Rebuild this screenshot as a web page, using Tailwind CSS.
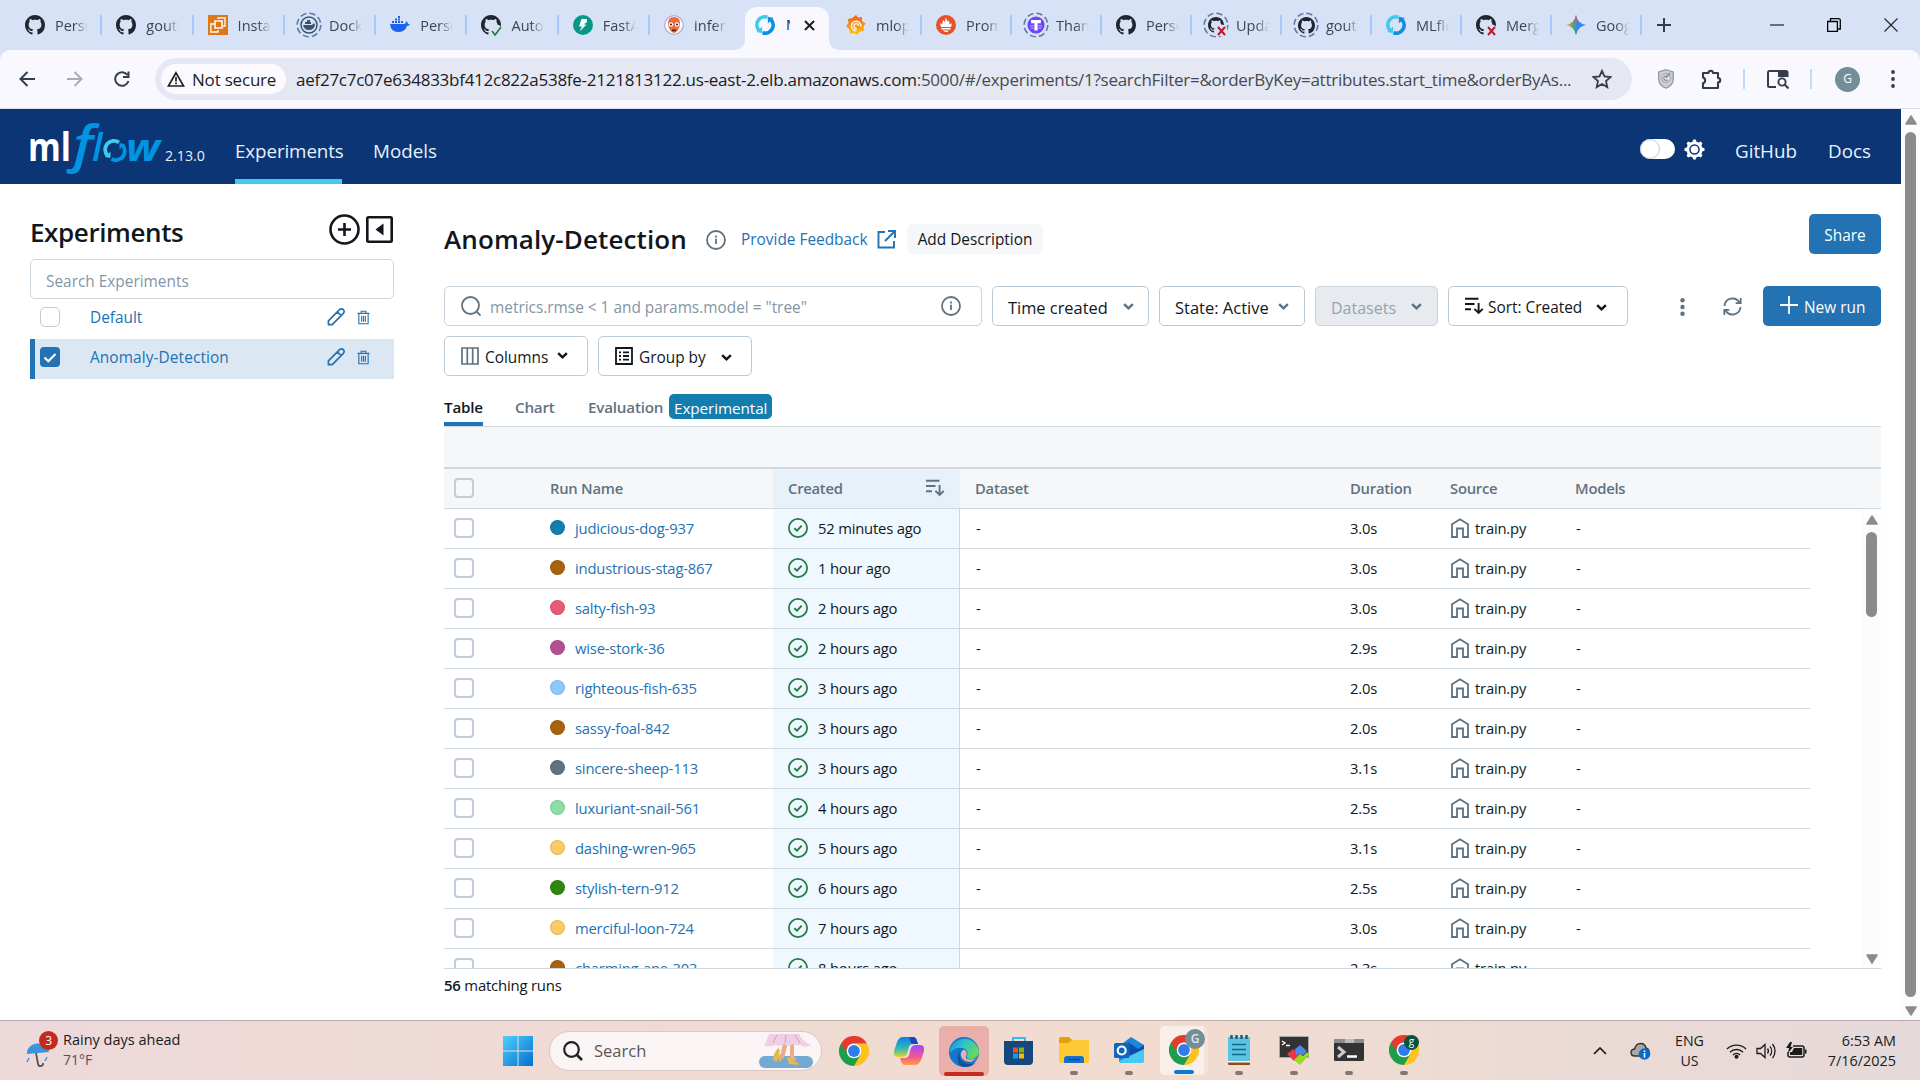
<!DOCTYPE html>
<html lang="en">
<head>
<meta charset="utf-8">
<title>MLflow</title>
<script src="https://cdn.jsdelivr.net/npm/@tailwindcss/browser@4"></script>
</head>
<body class="w-[1920px] h-[1080px] overflow-hidden bg-white font-['Open_Sans','Noto_Sans',sans-serif] text-[15.4px] leading-5 text-[#11171c] flex flex-col whitespace-nowrap">

<svg class="hidden">
  <symbol id="gh" viewBox="0 0 16 16"><path fill="#1f2630" d="M8 0C3.58 0 0 3.58 0 8c0 3.54 2.29 6.53 5.47 7.59.4.07.55-.17.55-.38 0-.19-.01-.82-.01-1.49-2.01.37-2.53-.49-2.69-.94-.09-.23-.48-.94-.82-1.13-.28-.15-.68-.52-.01-.53.63-.01 1.08.58 1.23.82.72 1.21 1.87.87 2.33.66.07-.52.28-.87.51-1.07-1.78-.2-3.64-.89-3.64-3.95 0-.87.31-1.59.82-2.15-.08-.2-.36-1.02.08-2.12 0 0 .67-.21 2.2.82.64-.18 1.32-.27 2-.27s1.36.09 2 .27c1.53-1.04 2.2-.82 2.2-.82.44 1.1.16 1.92.08 2.12.51.56.82 1.27.82 2.15 0 3.07-1.87 3.75-3.65 3.95.29.25.54.73.54 1.48 0 1.07-.01 1.93-.01 2.2 0 .21.15.46.55.38A8.01 8.01 0 0 0 16 8c0-4.42-3.58-8-8-8z"/></symbol>
  <symbol id="ring" viewBox="0 0 26 26"><circle cx="13" cy="13" r="11.8" fill="none" stroke="#5b7aa5" stroke-width="1.6" stroke-dasharray="6.2 3.07"/></symbol>
  <symbol id="mlf" viewBox="0 0 20 20"><path d="M12.500 2.300A8 8 0 0 0 4 15.300" fill="none" stroke="#43c9ed" stroke-width="3.600"/><path d="M7.500 17.700A8 8 0 0 0 16 4.700" fill="none" stroke="#0b8fe0" stroke-width="3.600"/><path d="M7.200 11.500v6.800L1.300 17z" fill="#43c9ed"/><path d="M12.800 8.500V1.700L18.700 3z" fill="#0b8fe0"/></symbol>
  <symbol id="caret" viewBox="0 0 12 12"><path d="M2 3.700 6 7.700 10 3.700" fill="none" stroke="currentColor" stroke-width="2.3"/></symbol>
  <symbol id="info" viewBox="0 0 20 20"><circle cx="10" cy="10" r="9" fill="none" stroke="currentColor" stroke-width="1.8"/><path d="M10 8.800v5.200M10 5.600v1.900" stroke="currentColor" stroke-width="1.8"/></symbol>
  <symbol id="pencil" viewBox="0 0 20 20"><path d="M1.500 18.500v-4L13.200 2.700a2.700 2.700 0 0 1 4 4L5.500 18.500zM10.800 5l4.200 4.200" fill="none" stroke="currentColor" stroke-width="1.8" stroke-linejoin="round"/></symbol>
  <symbol id="trash" viewBox="0 0 14 16"><path d="M.5 3.500h13M4.500 3.500V1.200h5v2.300M2 3.500v11.200h10V3.500M5 6v6.500M7 6v6.500M9 6v6.500" fill="none" stroke="currentColor" stroke-width="1.2"/></symbol>
  <symbol id="sort" viewBox="0 0 20 20"><path d="M1 2.800h13.500M1 8h9.500M1 13.200h6" fill="none" stroke="currentColor" stroke-width="1.900"/><path d="M14.600 7v9.800M10.400 12.800l4.200 4.200 4.200-4.200" fill="none" stroke="currentColor" stroke-width="1.900"/></symbol>
  <symbol id="ok" viewBox="0 0 20 20"><circle cx="10" cy="10" r="9.100" fill="none" stroke="#277c43" stroke-width="1.800"/><path d="M6.300 10.200 9 12.700 13.700 7.600" fill="none" stroke="#277c43" stroke-width="2"/></symbol>
  <symbol id="home" viewBox="0 0 18 20"><path d="M1 6.300 9 1.200l8 5.100v12.700h-5v-8.500H6v8.500H1z" fill="none" stroke="#5f7281" stroke-width="1.800"/></symbol>
  <symbol id="up" viewBox="0 0 12 10"><path d="M6 1 11 9H1z" fill="#8b8b8b" stroke="#8b8b8b" stroke-width="1.500" stroke-linejoin="round"/></symbol>
  <symbol id="down" viewBox="0 0 12 10"><path d="M6 9 11 1H1z" fill="#8b8b8b" stroke="#8b8b8b" stroke-width="1.500" stroke-linejoin="round"/></symbol>
  <symbol id="chrome" viewBox="0 0 30 30"><path d="M15 7.500h13A15 15 0 0 1 15 30l-2-4z" fill="#fcc31e"/><path d="M2 7.500A15 15 0 0 0 15 30l6.500-11.200L15 15z" fill="#1e9e4a"/><path d="M2 7.500A15 15 0 0 1 28 7.500H15a7.500 7.500 0 0 0-7 5L7 16z" fill="#e33b2e"/><circle cx="15" cy="15" r="7.300" fill="#fff"/><circle cx="15" cy="15" r="5.900" fill="#2f7bea"/></symbol>
</svg>

<!-- tab strip -->
<header class="h-[50px] shrink-0 bg-[#d8e2f6] flex text-[14.500px] text-[#3c4556]">
  <div id="tabs-left" class="flex pl-[11px] w-[741px] shrink-0"></div>
  <div class="w-[91px] shrink-0 flex items-end">
    <div class="w-2.5 h-2.5 -ml-1.5 bg-[#f9f8ff] shrink-0"><div class="size-2.5 bg-[#d8e2f6] rounded-br-[10px]"></div></div>
    <div class="w-[84px] h-[43px] shrink-0 bg-[#f9f8ff] rounded-t-[12px] flex items-center pl-[10px] pb-[7px]">
      <svg class="size-5"><use href="#mlf"/></svg>
      <span class="w-[4px] ml-[11px] overflow-hidden text-[#1f1f1f]">M</span>
      <svg class="size-[11px] ml-[14px]" viewBox="0 0 12 12"><path d="M1 1l10 10M11 1 1 11" stroke="#1f1f1f" stroke-width="2.200"/></svg>
    </div>
    <div class="w-2.5 h-2.5 bg-[#f9f8ff] shrink-0"><div class="size-2.5 bg-[#d8e2f6] rounded-bl-[10px]"></div></div>
  </div>
  <div id="tabs-right" class="flex shrink-0"></div>
  <div class="flex grow items-center justify-between pl-[15px] pr-[22px]">
    <svg class="size-[14px]" viewBox="0 0 14 14"><path d="M7 0v14M0 7h14" stroke="#333d4c" stroke-width="2"/></svg>
    <div class="flex items-center gap-[43px] text-[#222]">
      <svg class="size-[14px]" viewBox="0 0 14 14"><path d="M0 7h14" stroke="currentColor" stroke-width="1.200"/></svg>
      <svg class="size-[14px]" viewBox="0 0 14 14"><path d="M.6 3.500h9.800v9.900H.6zM3.500 3.500V.7h8.200a1.600 1.600 0 0 1 1.600 1.600V11h-2.900" fill="none" stroke="#000" stroke-width="1.300"/></svg>
      <svg class="size-[14px]" viewBox="0 0 14 14"><path d="M.5.5l13 13M13.500.5l-13 13" stroke="currentColor" stroke-width="1.100"/></svg>
    </div>
  </div>
</header>

<!-- address bar -->
<div class="h-[59px] shrink-0 bg-[#d8e2f6]"><div class="h-[59px] rounded-t-[10px] bg-[#f9f8ff] border-b border-[#d9dcea] flex items-center pl-[19px]">
  <svg class="size-4 shrink-0" viewBox="0 0 16 16"><path d="M16 8H2M8.500 1 1.500 8l7 7" fill="none" stroke="#333d4c" stroke-width="2"/></svg>
  <svg class="size-4 shrink-0 ml-8" viewBox="0 0 16 16"><path d="M0 8h14M7.500 1l7 7-7 7" fill="none" stroke="#a8aab4" stroke-width="2"/></svg>
  <svg class="size-4 shrink-0 ml-[31px]" viewBox="0 0 16 16"><path d="M14.500 10A6.800 6.800 0 1 1 13.500 4M14.500.5v5.500H9" fill="none" stroke="#333d4c" stroke-width="2"/></svg>
  <div class="ml-[25px] w-[1477px] h-[42px] shrink-0 rounded-full bg-[#e5e8f3] flex items-center text-[17px]">
    <div class="ml-1.5 w-[125px] h-[30px] shrink-0 rounded-full bg-[#fbfaff] flex items-center pl-1.5 text-[#1f1f1f]">
      <svg class="w-[18px] h-4 mr-[7px] shrink-0" viewBox="0 0 18 16"><path d="M9 1.800 16.600 15H1.400z" fill="none" stroke="#1f1f1f" stroke-width="1.700"/><path d="M9 6v4.500M9 11.500v1.800" stroke="#1f1f1f" stroke-width="1.700"/></svg>
      <span class="tracking-[-0.2px] pt-0.5">Not secure</span>
    </div>
    <span class="ml-[10px] pt-0.5 text-[#474a50] w-[1290px] shrink-0 tracking-[-0.26px]"><span class="text-[#1b1c1f]">aef27c7c07e634833bf412c822a538fe-2121813122.us-east-2.elb.amazonaws.com</span>:5000/#/experiments/1?searchFilter=&amp;orderByKey=attributes.start_time&amp;orderByAs...</span>
    <svg class="size-[20px] shrink-0 ml-[6px]" viewBox="0 0 20 20"><path d="M10 1.800l2.500 5.600 6.100.6-4.600 4.100 1.300 6L10 15l-5.300 3.100 1.300-6L1.400 8l6.100-.6z" fill="none" stroke="#333d4c" stroke-width="1.800"/></svg>
  </div>
  <svg class="w-4 h-5 ml-[26px] shrink-0" viewBox="0 0 16 20"><path d="M8 .7 15.300 3v7c0 4-3 7.500-7.300 9.300C3.700 17.500.7 14 .7 10V3z" fill="#c9cdd6" stroke="#8d94a1" stroke-width="1.200"/><circle cx="8" cy="9" r="4.300" fill="#e9ebf0" stroke="#9299a6"/><path d="M9.800 7.600a2.300 2.300 0 1 0 0 3M8 9l4-5" stroke="#858c99" fill="none" stroke-width="1.300"/></svg>
  <svg class="w-[21px] h-[21px] ml-[27px] shrink-0" viewBox="0 0 21 21"><path d="M2 4h5.500a2.200 2.200 0 0 1 4.400 0H17v5a2.200 2.200 0 0 1 0 4.400V19H2v-4.800a2.900 2.900 0 0 0 0-5.600z" fill="none" stroke="#333d4c" stroke-width="2.100" stroke-linejoin="round"/><path d="M7.700 3a2.100 2.100 0 0 1 4.200 0M18 9a2.200 2.200 0 0 1 0 4.400" fill="#333d4c"/></svg>
  <div class="w-0.5 h-5 bg-[#c6dafc] ml-[21px] shrink-0"></div>
  <svg class="w-[22px] h-[19px] ml-[22px] shrink-0" viewBox="0 0 22 19"><path d="M9 17H2.500A1.500 1.500 0 0 1 1 15.500v-13A1.500 1.500 0 0 1 2.500 1H19a1.500 1.500 0 0 1 1.500 1.500V7" fill="none" stroke="#333d4c" stroke-width="2"/><path d="M11 1h9.500v6H11z" fill="#333d4c"/><circle cx="15" cy="12" r="3.600" fill="none" stroke="#333d4c" stroke-width="1.900"/><path d="M17.500 14.500 21.500 18.500" stroke="#333d4c" stroke-width="2"/></svg>
  <div class="w-0.5 h-5 bg-[#c6dafc] ml-[21px] shrink-0"></div>
  <div class="size-[25px] ml-[23px] rounded-full bg-[#738d99] text-white text-xs flex items-center justify-center shrink-0">G</div>
  <svg class="w-1 h-[18px] ml-[31px] shrink-0" viewBox="0 0 4 18"><circle cx="2" cy="2" r="1.900" fill="#333d4c"/><circle cx="2" cy="9" r="1.900" fill="#333d4c"/><circle cx="2" cy="16" r="1.900" fill="#333d4c"/></svg>
</div></div>

<!-- page -->
<div class="h-[911px] shrink-0 flex">
  <div class="w-[1901px] shrink-0 flex flex-col">
    <nav class="h-[75px] shrink-0 bg-[#0b3574] flex pl-[29px] pr-[30px] text-[#e7f1fb] text-[18.800px]">
      <svg class="w-[133px] h-[75px] shrink-0 font-['Open_Sans',sans-serif]" viewBox="29 109 133 75">
        <text x="28" y="161" font-size="39" font-weight="700" fill="#fff" textLength="43" lengthAdjust="spacingAndGlyphs">ml</text>
        <text x="73" y="162" font-size="51" font-weight="600" font-style="italic" fill="#0194e2" textLength="20" lengthAdjust="spacingAndGlyphs">f</text>
        <text x="92" y="161" font-size="38" font-weight="600" font-style="italic" fill="#0194e2">l</text>
        <path d="M119 142.400a8.800 8.800 0 0 0-11.500 13.200" fill="none" stroke="#43c9ed" stroke-width="3.800"/><path d="M111.500 158.800a8.800 8.800 0 0 0 11-13.500" fill="none" stroke="#0194e2" stroke-width="3.800"/><path d="M110.500 151.500v6.500l-5.500-1z" fill="#43c9ed"/><path d="M119.500 149.500v-6.500l5.500 1z" fill="#0194e2"/>
        <text x="126" y="161" font-size="38" font-weight="700" font-style="italic" fill="#0194e2" textLength="34" lengthAdjust="spacingAndGlyphs">w</text>
      </svg>
      <span class="text-[14.200px] w-[69px] pl-[3px] pt-[37px] shrink-0">2.13.0</span>
      <a class="w-[107px] ml-1 pt-[30px] border-b-[5px] border-[#43c9ed] leading-6 shrink-0 -tracking-[0.1px]">Experiments</a>
      <a class="ml-[31px] pt-[30px] leading-6">Models</a>
      <div class="ml-auto flex pt-[30px]">
        <div class="w-[35px] h-5 rounded-full bg-white"><div class="size-5 rounded-full border border-[#c0cdd8] bg-white"></div></div>
        <svg class="size-[21px] ml-[9px]" viewBox="0 0 21 21"><g fill="#fff"><circle cx="10.500" cy="10.500" r="8"/><path d="M7.800 5 9.300.5h2.400L13.200 5zM7.800 16l1.500 4.500h2.400l1.500-4.500zM5 7.800.5 9.300v2.400L5 13.200zM16 7.800l4.500 1.500v2.400L16 13.200z"/><path transform="rotate(45 10.500 10.500)" d="M7.800 5 9.300.5h2.400L13.200 5zM7.800 16l1.500 4.500h2.400l1.500-4.500zM5 7.800.5 9.300v2.400L5 13.200zM16 7.800l4.500 1.500v2.400L16 13.200z"/></g><circle cx="10.500" cy="10.500" r="4.500" fill="none" stroke="#0b3574" stroke-width="1.500"/></svg>
        <a class="ml-[30px] leading-6 w-[63px]">GitHub</a>
        <a class="ml-[30px] leading-6 w-[43px]">Docs</a>
      </div>
    </nav>

    <div class="flex grow">
      <!-- sidebar -->
      <aside class="w-[394px] pl-[30px] pt-[30px] shrink-0">
        <div class="flex h-[45px]">
          <h2 class="text-[26px] font-semibold leading-9 -tracking-[0.4px]">Experiments</h2>
          <svg class="size-[31px] ml-auto" viewBox="0 0 31 31"><circle cx="15.500" cy="15.500" r="14" fill="none" stroke="#11171c" stroke-width="2.600"/><path d="M15.500 9v13M9 15.500h13" stroke="#11171c" stroke-width="2.600"/></svg>
          <svg class="size-[27px] ml-1.5 mr-[1px] mt-[2px]" viewBox="0 0 27 27"><rect x="1.300" y="1.300" width="24.400" height="24.400" rx="1" fill="none" stroke="#11171c" stroke-width="2.600"/><path d="M17.500 7.500v12l-8-6z" fill="#11171c"/></svg>
        </div>
        <div class="h-10 w-[364px] border border-[#cdd8e1] rounded-[5px] pl-[15px] flex items-center pt-[5px] text-[#8396a5]">Search Experiments</div>
        <div class="h-10 w-[364px] flex items-center pl-2.5 text-[#2272b4] pb-1">
          <div class="size-5 rounded-[5px] border border-[#c0cdd8] mr-[30px]"></div><span class="pt-0.5">Default</span>
          <svg class="size-[19px] ml-auto mb-0.5 mr-px"><use href="#pencil"/></svg><svg class="w-[13px] h-[15px] ml-2.5 mr-6"><use href="#trash"/></svg>
        </div>
        <div class="h-10 w-[364px] flex items-center pl-[5px] border-l-[5px] border-[#2272b4] bg-[#dbe7f3] text-[#2272b4] pb-1">
          <div class="size-5 rounded-[4px] bg-[#2272b4] mr-[30px]"><svg class="size-5" viewBox="0 0 20 20"><path d="M4.500 10.500 8.300 14.300 15.500 7" fill="none" stroke="#fff" stroke-width="2.100"/></svg></div><span class="pt-0.5 tracking-[0.1px]">Anomaly-Detection</span>
          <svg class="size-[19px] ml-auto mb-0.5 mr-px"><use href="#pencil"/></svg><svg class="w-[13px] h-[15px] ml-2.5 mr-6"><use href="#trash"/></svg>
        </div>
      </aside>

      <!-- runs -->
      <main class="w-[1437px] ml-[50px] pt-[30px] shrink-0">
        <div class="flex h-[72px]">
          <h1 class="text-[26px] font-semibold leading-9 mt-[7px] w-[262px] tracking-[0.1px]">Anomaly-Detection</h1>
          <svg class="size-5 mt-4 text-[#5f7281]"><use href="#info"/></svg>
          <span class="ml-[15px] mt-[16px] w-[127px] text-[#2272b4]">Provide Feedback</span>
          <svg class="size-[19px] ml-[9px] mt-4 text-[#2272b4]" viewBox="0 0 19 19"><path d="M8 2H1.500v15.500H17V11M11 1h7v7M17.500 1.500 8 11" fill="none" stroke="currentColor" stroke-width="1.900"/></svg>
          <span class="ml-[11px] mt-[10px] h-[30px] w-[136px] rounded-[5px] bg-[#f6f7f9] flex items-center justify-center pt-0.5">Add Description</span>
          <button class="ml-auto w-[72px] h-10 rounded-[5px] bg-[#2272b4] text-white pt-1">Share</button>
        </div>
        <div class="flex h-[50px]">
          <div class="h-10 w-[538px] border border-[#c9d4de] rounded-[5px] flex items-center pl-4 pr-5 text-[#8396a5]">
            <svg class="size-5 text-[#5f7281]" viewBox="0 0 20 20"><circle cx="9.500" cy="9.500" r="8.500" fill="none" stroke="currentColor" stroke-width="1.800"/><path d="M15.500 15.500 19.500 19.500" stroke="currentColor" stroke-width="1.800"/></svg>
            <span class="ml-[9px] pt-1">metrics.rmse &lt; 1 and params.model = "tree"</span>
            <svg class="size-5 ml-auto text-[#5f7281]"><use href="#info"/></svg>
          </div>
          <div class="ml-2.5 h-10 w-[157px] border border-[#bccad6] rounded-[5px] flex items-center justify-between pl-[15px] pr-[13px] text-[16.400px]"><span class="pt-1 w-[102px]">Time created</span><svg class="size-[13px] text-[#5f7281]"><use href="#caret"/></svg></div>
          <div class="ml-2.5 h-10 w-[146px] border border-[#bccad6] rounded-[5px] flex items-center justify-between pl-[15px] pr-[14px] text-[16.500px]"><span class="pt-1 w-[95px]">State: Active</span><svg class="size-[13px] text-[#5f7281]"><use href="#caret"/></svg></div>
          <div class="ml-2.5 h-10 w-[123px] border border-[#c9d4de] bg-[#e7ebef] rounded-[5px] flex items-center justify-between pl-[15px] pr-[14px] text-[#92a4b3] text-[16px]"><span class="pt-1">Datasets</span><svg class="size-[13px] text-[#5f7281]"><use href="#caret"/></svg></div>
          <div class="ml-2.5 h-10 w-[180px] border border-[#bccad6] rounded-[5px] flex items-center pl-[15px]"><svg class="size-5"><use href="#sort"/></svg><span class="pt-1 ml-1 w-[95px]">Sort: Created</span><svg class="size-[13px] ml-[12px] mt-0.5"><use href="#caret"/></svg></div>
          <svg class="w-[5px] h-[18px] ml-auto mt-3" viewBox="0 0 5 18"><circle cx="2.500" cy="2.300" r="2.200" fill="#5f7281"/><circle cx="2.500" cy="9" r="2.200" fill="#5f7281"/><circle cx="2.500" cy="15.700" r="2.200" fill="#5f7281"/></svg>
          <svg class="size-[19px] ml-[38px] mt-[11px] text-[#5f7281]" viewBox="0 0 19 19"><path d="M1.500 9A8 8 0 0 1 16.500 5.700M17.500 10A8 8 0 0 1 2.500 13.300M17.700 1v5.200h-5M1.300 18v-5.200h5" fill="none" stroke="currentColor" stroke-width="1.800"/></svg>
          <button class="ml-[21px] w-[118px] h-10 rounded-[5px] bg-[#2272b4] text-white flex items-center pl-[17px]"><svg class="size-[18px] mb-0.5" viewBox="0 0 18 18"><path d="M9 0v18M0 9h18" stroke="#fff" stroke-width="1.800"/></svg><span class="ml-1.5 pt-1">New run</span></button>
        </div>
        <div class="flex gap-2.5 h-[50px]">
          <div class="h-10 w-[144px] border border-[#bccad6] rounded-[5px] flex items-center pl-4"><svg class="size-[18px] text-[#5f7281]" viewBox="0 0 18 18"><path d="M1 1h16v16H1zM6.300 1v16M11.700 1v16" fill="none" stroke="currentColor" stroke-width="1.700"/></svg><span class="pt-1 ml-1.5 w-[64px]">Columns</span><svg class="size-[13px] ml-[7px] -mt-0.5"><use href="#caret"/></svg></div>
          <div class="h-10 w-[154px] border border-[#bccad6] rounded-[5px] flex items-center pl-4"><svg class="size-[18px]" viewBox="0 0 18 18"><path d="M1 1h16v16H1zM4 5.300h2M8 5.300h6M4 9h2M8 9h6M4 12.700h2M8 12.700h6" fill="none" stroke="currentColor" stroke-width="1.800"/></svg><span class="pt-1 ml-1.5 w-[68px]">Group by</span><svg class="size-[13px] ml-[13px] mt-0.5"><use href="#caret"/></svg></div>
        </div>
        <div class="flex h-[41px] border-b border-[#cdd8e1] font-semibold text-[#5f7281] text-[15.200px]">
          <div class="w-[39px] h-10 border-b-4 border-[#2272b4] text-[#11171c] pt-[11px] -tracking-[0.2px]">Table</div>
          <div class="ml-8 pt-[11px] w-[41px] -tracking-[0.2px]">Chart</div>
          <div class="ml-8 pt-[11px] w-[77px] -tracking-[0.2px]">Evaluation</div>
          <div class="ml-1 mt-2 w-[103px] h-[25px] rounded-[5px] bg-[#137dae] text-white font-normal text-[15.300px] -tracking-[0.1px] pl-[5px] pt-[4px]">Experimental</div>
        </div>
        <div class="h-[42px] bg-[#f6f7f9] border-b-2 border-[#cdd8e1]"></div>
        <div class="h-10 bg-[#f6f7f9] border-b border-[#cdd8e1] flex items-center text-[#5f7281] font-semibold text-[14.800px] -tracking-[0.25px]">
          <div class="w-[106px] pl-2.5 pb-0.5"><div class="size-5 rounded-[4px] border-2 border-[#c0cdd8] bg-[#f6f7f9]"></div></div>
          <div class="w-[223px] pb-0.5">Run Name</div>
          <div class="w-[187px] h-full bg-[#e8f1fa] flex items-center justify-between pl-[15px] pr-[15px] pb-0.5">Created<svg class="size-5"><use href="#sort"/></svg></div>
          <div class="w-[375px] pl-[15px] pb-0.5">Dataset</div>
          <div class="w-[100px] pl-[15px] pb-0.5">Duration</div>
          <div class="w-[125px] pl-[15px] pb-0.5">Source</div>
          <div class="pl-[15px] pb-0.5">Models</div>
        </div>
        <div class="h-[460px] border-b border-[#cdd8e1] flex overflow-hidden">
          <div id="rows" class="w-[1366px] shrink-0"></div>
          <div class="ml-auto w-[19px] bg-[#fcfcfc] flex flex-col items-center pt-1.5">
            <svg class="w-3 h-2.5 shrink-0"><use href="#up"/></svg>
            <div class="w-[11px] h-[85px] rounded-full bg-[#8b8b8b] mt-[7px]"></div>
            <svg class="w-3 h-2.5 shrink-0 mt-auto mb-1"><use href="#down"/></svg>
          </div>
        </div>
        <div class="pt-[6px] text-[14.900px] tracking-[-0.2px]"><b class="font-semibold">56</b> matching runs</div>
      </main>
    </div>
  </div>
  <div class="w-[19px] bg-[#fcfcfc] flex flex-col items-center pt-1.5">
    <svg class="w-3 h-2.5 shrink-0"><use href="#up"/></svg>
    <div class="w-[11px] h-[865px] rounded-full bg-[#8b8b8b] mt-[7px]"></div>
    <svg class="w-3 h-2.5 shrink-0 mt-auto mb-1"><use href="#down"/></svg>
  </div>
</div>

<!-- taskbar -->
<footer class="h-[60px] shrink-0 border-t border-[#b9abad] bg-linear-to-r from-[#edd9da] via-[#f2dccf] via-60% to-[#e5d9da] flex items-center text-[14.200px] text-[#1b1b1b]">
  <div class="w-[503px] shrink-0 flex pl-[26px] pb-0.5">
    <svg class="w-8 h-[38px]" viewBox="26 1026 32 38"><path d="M27 1050a11 9.500 0 0 1 22-2z" fill="#3f93dc"/><path d="M36 1049l2 11a2.500 2.500 0 0 0 5-1" fill="none" stroke="#555" stroke-width="1.800"/><path d="M29 1054l-2 4M47 1053l-2 4" stroke="#3f93dc" stroke-width="1.500"/><circle cx="48.500" cy="1036.500" r="9.500" fill="#c42b1c"/><text x="45.300" y="1041" font-size="12" fill="#fff">3</text></svg>
    <div class="ml-[5px]"><div class="text-[14.500px]">Rainy days ahead</div><div class="text-[#555052] text-[14px]">71°F</div></div>
  </div>
  <svg class="size-[30px] shrink-0" viewBox="0 0 30 30"><defs><linearGradient id="wg" x1="0" y1="0" x2="1" y2="1"><stop offset="0" stop-color="#4fd0fb"/><stop offset="1" stop-color="#0270cf"/></linearGradient></defs><path d="M0 0h14.500v14.500H0zM15.500 0H30v14.500H15.500zM0 15.500h14.500V30H0zM15.500 15.500H30V30H15.500z" fill="url(#wg)"/></svg>
  <div class="ml-4 w-[273px] h-10 shrink-0 rounded-full bg-[#faf4f4] border border-[#d8c8c8] flex items-center pl-[13px] text-[16.500px] text-[#5a5556] overflow-hidden">
    <svg class="size-5 shrink-0" viewBox="0 0 20 20"><circle cx="8.500" cy="8.500" r="7.300" fill="none" stroke="#222" stroke-width="2.200"/><path d="M13.500 13.500 19 19" stroke="#222" stroke-width="2.600"/></svg>
    <span class="ml-[11px]">Search</span>
    <svg class="w-[54px] h-[34px] ml-auto mr-[8px]" viewBox="0 0 54 34"><rect y="22" width="54" height="12" rx="6" fill="#74a9d3"/><path d="M24 8h5l-3 13-2 4-5-1 3-5zM31 8h4l0 14 3 5-7-1z" fill="#e8ad8b"/><path d="M10 0h30q4 8 12 11-6 3-11 0-4 1-7-1-4 3-9 0-4 3-8 1-5 2-12 1Q8 6 10 0z" fill="#f0cfe4"/><path d="M18 1l-4 8M27 1l-1 8M36 1l5 8" stroke="#cf9fc5"/><path d="M19 14q-5 6-5 12l4 2 1-4 2 4 2-2q-4-3-2-10zM28 24l2 6 10 1-1-2-6-3-3-3z" fill="#eab845"/></svg>
  </div>
  <svg class="size-[30px] ml-[17px] shrink-0"><use href="#chrome"/></svg>
  <svg class="size-[30px] ml-[25px] shrink-0" viewBox="0 0 30 30"><defs><linearGradient id="c1" x1="0" y1="0" x2="0" y2="1"><stop offset="0" stop-color="#0c7fe8"/><stop offset=".6" stop-color="#37bdb1"/><stop offset="1" stop-color="#e8d22a"/></linearGradient><linearGradient id="c2" x1="0" y1="0" x2="0" y2="1"><stop offset="0" stop-color="#a048ff"/><stop offset=".6" stop-color="#f2598a"/><stop offset="1" stop-color="#ff9f4a"/></linearGradient></defs><path d="M9 1h10q3 0 4 4l1 3h-5q-3 0-4 3l-2 7q-1 3-5 3H4q-5 0-4-6L3 6q2-5 6-5z" fill="url(#c1)"/><path d="M21 29H11q-3 0-4-4l-1-3h5q3 0 4-3l2-7q1-3 5-3h4q5 0 4 6l-3 9q-2 5-6 5z" fill="url(#c2)"/><path d="M15 1h4q3 0 4 4l1 3h-5l-2-1z" fill="#1747c0"/></svg>
  <div class="w-[50px] h-[50px] ml-[15px] shrink-0 rounded-[5px] bg-[#e9afab] flex flex-col items-center justify-end">
    <svg class="size-[30px] mb-[5px]" viewBox="0 0 30 30"><defs><linearGradient id="e1" x1="0" y1="0" x2="1" y2=".5"><stop offset="0" stop-color="#1690d8"/><stop offset=".5" stop-color="#2fc3cf"/><stop offset="1" stop-color="#63dc55"/></linearGradient></defs><circle cx="15" cy="15" r="15" fill="#1276cf"/><path d="M1 12A15 15 0 0 1 30 14c0 5-4 8-8 8-3 0-5-1-4-3 2-4-1-8-5-8-5-1-9 1-11.500 5z" fill="url(#e1)"/><path d="M11 14c-2 7 2 13 10 13 3 0 6-1 7-3A15 15 0 0 1 15 30C8 29 7 19 11 14z" fill="#134f94"/><path d="M17 19.500c2-4 0-6-2-7 0 0-4 2-3 6 1 5 6 7 11 6l6-4q-3 2-7 2c-4 0-6-1-5-3z" fill="#e9afab"/></svg>
    <div class="w-10 h-1 rounded-full bg-[#c72b20]"></div>
  </div>
  <svg class="size-[30px] ml-[15px] shrink-0" viewBox="0 0 30 30"><path d="M9 5V2h12v3" fill="none" stroke="#35bdf2" stroke-width="2"/><path d="M0 5h29v20q0 4-4 4H4q-4 0-4-4z" fill="#16477f"/><path d="M9 11.500h5v5H9z" fill="#f25022"/><path d="M15 11.500h5v5h-5z" fill="#7fba00"/><path d="M9 17.500h5v5H9z" fill="#00a4ef"/><path d="M15 17.500h5v5h-5z" fill="#ffb900"/></svg>
  <div class="w-[30px] ml-[25px] shrink-0 h-[50px] flex flex-col items-center pt-[11px]"><svg class="w-[30px] h-[27px]" viewBox="0 0 30 27"><path d="M0 2q0-2 2-2h8l3 3v5H0z" fill="#e3a008"/><path d="M0 6h9l4-3h17v21q0 2-2 2H2q-2 0-2-2z" fill="#fdc935"/><path d="M5 26v-4q0-3 3-3h14q3 0 3 3v4z" fill="#1571cd"/><path d="M9 22.500h12" stroke="#0b4a99" stroke-width="1.500"/></svg><div class="w-2 h-1 rounded-full bg-[#827778] mt-[7px]"></div></div>
  <div class="w-[30px] ml-[25px] shrink-0 h-[50px] flex flex-col items-center pt-[11px]"><svg class="w-[30px] h-[27px]" viewBox="0 0 30 27"><path d="M5 9 17 0l13 8v15q0 3-3 3H8q-3 0-3-3z" fill="#1c86dd"/><path d="M14 5l10 7 6-4v4L16 21z" fill="#0a4ea5"/><path d="M30 12v11q0 3-3 3H8l-3-2z" fill="#47c8f5"/><rect y="6" width="15.500" height="15" rx="1.500" fill="#1066bd"/><circle cx="7.700" cy="13.500" r="4" fill="none" stroke="#fff" stroke-width="2.200"/></svg><div class="w-2 h-1 rounded-full bg-[#827778] mt-[7px]"></div></div>
  <div class="ml-4 w-[48px] h-[49px] shrink-0 rounded-[5px] bg-[#f8eeea] border-r-4 border-[#f1e3dd] flex flex-col items-center relative pt-[9px] pl-[3px]"><svg class="size-[30px]"><use href="#chrome"/></svg><div class="w-5 h-1 rounded-full bg-[#0a78d6] mt-[5px]"></div><div class="absolute left-[25px] top-[3px] size-5 rounded-full bg-[#738d99] text-[#dfe8ec] text-xs leading-5 text-center font-semibold">G</div></div>
  <div class="w-[22px] ml-5 shrink-0 h-[50px] flex flex-col items-center pt-[9px]"><svg class="w-[22px] h-[31px]" viewBox="0 0 22 31"><path d="M0 26h22v3q0 1-1 1H1q-1 0-1-1z" fill="#8f4a15"/><path d="M0 2h22v24l-2 1H0z" fill="#5cc3e0"/><path d="M0 26h22v1.500H0z" fill="#fff"/><path d="M4 9.500h14M4 14.500h14M4 19.500h14" stroke="#0e6b8c" stroke-width="1.700"/><path d="M3.500 0v4M8.500 0v4M13.500 0v4M18.500 0v4" stroke="#17627d" stroke-width="2.500"/></svg><div class="w-2 h-1 rounded-full bg-[#827778] mt-[5px]"></div></div>
  <div class="w-[30px] ml-[29px] shrink-0 h-[50px] flex flex-col items-center pt-[10px]"><svg class="w-[30px] h-[30px]" viewBox="0 0 30 30"><path d="M.5.500h29v21H.5z" fill="#333" stroke="#aaa"/><path d="M3 5l3 2-3 2M7 9.500h4" fill="none" stroke="#fff" stroke-width="1.300"/><path d="M8 18l6-5 7 6-6 6z" fill="#e8364a"/><path d="M16 13l5-4 7 6-4 4-4-1-3 1z" fill="#4a86ee"/><path d="M15 24l6-6 3 2 4-4 2 3-9 10z" fill="#9adb1c"/></svg><div class="w-2 h-1 rounded-full bg-[#827778] mt-[5px]"></div></div>
  <div class="w-[30px] ml-[25px] shrink-0 h-[50px] flex flex-col items-center pt-[13px]"><svg class="w-[30px] h-[23px]" viewBox="0 0 30 23"><rect width="30" height="22" rx="1.500" fill="#333"/><path d="M0 1.500Q0 0 1.500 0h27Q30 0 30 1.500V4H0z" fill="#8c8c8c"/><path d="M11 0h9v4h-9z" fill="#bbb"/><path d="M4 8l6 5-6 5" fill="none" stroke="#ccc" stroke-width="3"/><path d="M13 17.500h10" stroke="#fff" stroke-width="2.500"/></svg><div class="w-2 h-1 rounded-full bg-[#827778] mt-[9px]"></div></div>
  <div class="w-[30px] ml-[25px] shrink-0 h-[50px] flex flex-col items-center pt-[9px] relative"><svg class="size-[30px] shrink-0"><use href="#chrome"/></svg><div class="w-2 h-1 rounded-full bg-[#827778] mt-[6px] shrink-0"></div><div class="absolute left-[15px] top-[9px] size-[15px] rounded-full bg-[#07513f] text-white text-[10px] leading-[13px] text-center">g</div></div>
  <div class="ml-auto flex items-center pr-[24px]">
    <svg class="w-[14px] h-2 shrink-0 mr-px" viewBox="0 0 14 8"><path d="M1 7l6-6 6 6" fill="none" stroke="#1b1b1b" stroke-width="1.700"/></svg>
    <svg class="w-[21px] h-[18px] ml-[22px] shrink-0" viewBox="0 0 21 18"><path d="M5 14Q1 14 1 10.500 1 7.500 4.500 7 6 1.500 10.500 1.500T16 6q3 1 3 4t-4 4z" fill="#aaa7a7" stroke="#333" stroke-width="1.400"/><circle cx="14.500" cy="12" r="5.800" fill="#0a6ac9"/><path d="M14.500 11v4.500M14.500 8.500v1.600" stroke="#fff" stroke-width="1.600"/></svg>
    <div class="ml-6 w-[29px] text-center shrink-0">ENG<br>US</div>
    <svg class="w-[21px] h-[16px] ml-[22px] shrink-0" viewBox="0 0 21 16"><path d="M1 6a13.500 13.500 0 0 1 19 0M4 9.200a9.200 9.200 0 0 1 13 0M6.900 12a5.200 5.200 0 0 1 7.200 0" fill="none" stroke="#1b1b1b" stroke-width="1.400"/><circle cx="10.500" cy="13.800" r="2" fill="#1b1b1b"/></svg>
    <svg class="w-[21px] h-[18px] ml-[9px] shrink-0" viewBox="0 0 21 18"><path d="M1 6.500h3.500L9 2.500v13L4.500 11.500H1z" fill="none" stroke="#1b1b1b" stroke-width="1.300"/><path d="M11.500 6.500a4 4 0 0 1 0 5M14 4.300a7.500 7.500 0 0 1 0 9.400M16.500 2a11 11 0 0 1 0 14" fill="none" stroke="#1b1b1b" stroke-width="1.300"/></svg>
    <svg class="w-[21px] h-[17px] ml-[9px] shrink-0" viewBox="0 0 21 17"><path d="M7 4h9q2 0 2 2v7q0 2-2 2H4q-2 0-2-2v-3" fill="none" stroke="#1b1b1b" stroke-width="1.500"/><path d="M8 6h8.200v7H4v-3h2zM19 7.500h1.500v4H19zM4 0 0 6h3l-1 5 5-6H4.500L6 0z" fill="#1b1b1b"/></svg>
    <div class="w-[89px] text-right shrink-0 text-[14.400px]">6:53 AM<br>7/16/2025</div>
  </div>
</footer>

<script>
const use = (id, size = 'size-5') => `<svg class="${size}"><use href="#${id}"/></svg>`;
const ringed = inner => `<div class="relative size-5 flex items-center justify-center"><svg class="absolute -left-[3px] -top-[3px] size-[26px]"><use href="#ring"/></svg>${inner}</div>`;
const whale = c => `<svg class="size-5" viewBox="0 0 20 20"><path d="M0 9h14q2 0 2-3 2 1 2 3h2q-1 2-3 2-2 6-9 6Q1 17 0 9z" fill="${c}"/><path d="M2 6h2v2H2zM5 6h2v2H5zM8 6h2v2H8zM11 6h2v2h-2zM5 3.500h2v2H5zM8 3.500h2v2H8zM8 1h2v2H8z" fill="${c}"/></svg>`;
const marked = (m, size = 'size-5', at = 'left-[9px] top-[9px]') => `<div class="relative ${size}">${use('gh', size)}<svg class="absolute ${at} size-3" viewBox="0 0 12 12"><circle cx="6.500" cy="6.500" r="6" fill="#d8e2f6"/>${m}</svg></div>`;
const redX = '<path d="M3 3l7 8M10 3l-7 8" stroke="#c4162a" stroke-width="2"/>';
const I = {
  gh: use('gh'), mlf: use('mlf'),
  aws: `<svg class="size-5" viewBox="0 0 20 20"><path d="M0 0h20v20H0z" fill="#e0761a"/><path d="M7 6h7v7H7z" fill="none" stroke="#fff" stroke-width="1.500"/><path d="M10 4V2.800h7V11h-2M6 9H2.800v8H10v-2" fill="none" stroke="#fff" stroke-width="1.300"/></svg>`,
  dock: ringed(`<svg class="size-5" viewBox="0 0 20 20"><circle cx="10" cy="10" r="8" fill="none" stroke="#35566f" stroke-width="1.500"/><path d="M4 10h9l2-2 1 2q-1 5-6 5t-6-5zM6 7h6v2H6zM8 5h3v2H8z" fill="#35566f"/></svg>`),
  whale: whale('#1d63ed'),
  auto: marked('<path d="M2 7l3 4 6-8" fill="none" stroke="#1a7f37" stroke-width="1.600"/>'),
  fast: `<svg class="size-5" viewBox="0 0 20 20"><circle cx="10" cy="10" r="10" fill="#089688"/><path d="M14 4H8.500L6 11.500h3L6.500 16.500 13.500 9.500h-3L14 7z" fill="#fff"/></svg>`,
  inf: `<svg class="size-5" viewBox="0 0 20 20"><circle cx="10" cy="10" r="9.300" fill="#fff" stroke="#b9a9dc" stroke-width="1.300"/><path d="M4 8q0-6 6-6t6 6q0 4-2 7t-4 3-4-3-2-7z" fill="#ec6a3d"/><circle cx="7" cy="9.500" r="2.200" fill="#fff"/><circle cx="13" cy="9.500" r="2.200" fill="#fff"/><circle cx="7" cy="9.500" r="1" fill="#222"/><circle cx="13" cy="9.500" r="1" fill="#222"/><path d="M8 14.500h4v1.700H8z" fill="#5c1c10"/></svg>`,
  graf: `<svg class="size-5" viewBox="0 0 20 20"><defs><linearGradient id="gg" x1="0" y1="0" x2="0" y2="1"><stop offset="0" stop-color="#f05a28"/><stop offset="1" stop-color="#fbca0a"/></linearGradient></defs><path d="M10 0l2 2.500 4-.5v4l3.500 2.500-2 3 .5 4.500-4 .5L11 20l-3-2-4 .5-.5-4L0 11l2.500-3L2 4l4-.8z" fill="url(#gg)"/><path d="M15 11.500a4.800 4.800 0 1 0-4.500 4.300M12.800 10.800a2.400 2.400 0 1 0-2 2.800" fill="none" stroke="#fff3e2" stroke-width="1.500"/></svg>`,
  prom: `<svg class="size-5" viewBox="0 0 20 20"><circle cx="10" cy="10" r="10" fill="#e6522c"/><path d="M5.500 13h9v1.500h-9zM7 15.500h6q-1 1.500-3 1.500t-3-1.500zM5 12q-1-2-.500-4 1 1 2 1.500Q6 6 8 5q0 2 1 2 0-3 1-4.500Q10.500 5 12 7q.5-1 .3-2 1.700 2 1.200 4.500 1-.5 2-1.500.5 2-.5 4z" fill="#fff"/></svg>`,
  than: ringed(`<svg class="size-[18px]" viewBox="0 0 20 20"><circle cx="10" cy="10" r="9.500" fill="#6d41ff"/><path d="M4.500 4.500h11V8h-3.700v8H8.200V8H4.500z" fill="#fff"/><path d="M3 11h4.500M4 13.500h3.500M12.500 11H17M12.500 13.500H16" stroke="#cbbcff"/></svg>`),
  upd: ringed(marked(redX, 'size-4', 'left-[7px] top-[7px]')), gout: ringed(use('gh', 'size-[17px]')), cross: marked(redX),
  gem: `<svg class="size-5" viewBox="0 0 20 20"><defs><linearGradient id="g1" x1="0" y1=".5" x2="1" y2=".5"><stop offset="0" stop-color="#f5b90a"/><stop offset=".35" stop-color="#6a9f6a"/><stop offset=".55" stop-color="#3186ff"/></linearGradient><linearGradient id="g2" x1="0" y1="0" x2="0" y2="1"><stop offset="0" stop-color="#fb4a45"/><stop offset=".45" stop-color="#fb4a45" stop-opacity="0"/><stop offset=".6" stop-color="#22ae55" stop-opacity="0"/><stop offset="1" stop-color="#22ae55"/></linearGradient></defs><path d="M10 0q1.500 8.500 10 10-8.500 1.500-10 10Q8.500 11.500 0 10 8.500 8.500 10 0z" fill="url(#g1)"/><path d="M10 0q1.500 8.500 10 10-8.500 1.500-10 10Q8.500 11.500 0 10 8.500 8.500 10 0z" fill="url(#g2)"/></svg>`
};
const tab = (w, icon, text, sep) => `<div class="${w} shrink-0 h-[50px] flex items-center pl-[14px]">${I[icon]}<span class="ml-2.5 pt-0.5 w-[33px] overflow-hidden mask-r-from-60%">${text}</span><span class="ml-auto w-0.5 h-5 ${sep ? 'bg-[#a9c7fb]' : ''}"></span></div>`;
document.getElementById('tabs-left').innerHTML = [['gh','Perso'],['gh','gouth'],['aws','Instan'],['dock','Dock'],['whale','Perso'],['auto','Auton'],['fast','FastA'],['inf','infere']].map(([i,t],n)=>tab('w-[91.3px]',i,t,n<7)).join('');
document.getElementById('tabs-right').innerHTML = [['graf','mlops'],['prom','Prom'],['than','Than'],['gh','Perso'],['upd','Updat'],['gout','gout'],['mlf','MLflo'],['cross','Merg'],['gem','Goog']].map(([i,t])=>tab('w-[90px]',i,t,true)).join('');

const runs = [
  ['#137dae','judicious-dog-937','52 minutes ago','3.0s'],['#a6630c','industrious-stag-867','1 hour ago','3.0s'],
  ['#e65b77','salty-fish-93','2 hours ago','3.0s'],['#b45091','wise-stork-36','2 hours ago','2.9s'],
  ['#8acaff','righteous-fish-635','3 hours ago','2.0s'],['#a6630c','sassy-foal-842','3 hours ago','2.0s'],
  ['#5f7281','sincere-sheep-113','3 hours ago','3.1s'],['#8ddda8','luxuriant-snail-561','4 hours ago','2.5s'],
  ['#facb66','dashing-wren-965','5 hours ago','3.1s'],['#308613','stylish-tern-912','6 hours ago','2.5s'],
  ['#facb66','merciful-loon-724','7 hours ago','3.0s'],['#a6630c','charming-ape-303','8 hours ago','2.3s']];
document.getElementById('rows').innerHTML = runs.map(([c,n,t,d]) => `
  <div class="h-10 w-[1366px] border-b border-[#cdd8e1] flex items-center text-[14.800px] tracking-[-0.2px]">
    <div class="w-[106px] pl-2.5 pb-0.5 shrink-0"><div class="size-5 rounded-[4px] border-2 border-[#c0cdd8]"></div></div>
    <div class="w-[223px] pb-0.5 shrink-0 flex items-center text-[#2272b4]"><span class="size-[15px] rounded-full border border-black/10 mr-[10px]" style="background-color:${c}"></span>${n}</div>
    <div class="w-[187px] h-full pb-0.5 shrink-0 bg-[#f0f8ff] border-r border-[#cdd8e1] flex items-center pl-[15px]"><svg class="size-5 mr-2.5"><use href="#ok"/></svg>${t}</div>
    <div class="w-[375px] pl-4 pb-0.5 shrink-0">-</div>
    <div class="w-[100px] pl-[15px] pb-0.5 shrink-0">${d}</div>
    <div class="w-[125px] pl-4 pb-0.5 shrink-0 flex items-center"><svg class="w-[18px] h-5 mr-1.5"><use href="#home"/></svg>train.py</div>
    <div class="pl-4 pb-0.5">-</div>
  </div>`).join('');
</script>
</body>
</html>
